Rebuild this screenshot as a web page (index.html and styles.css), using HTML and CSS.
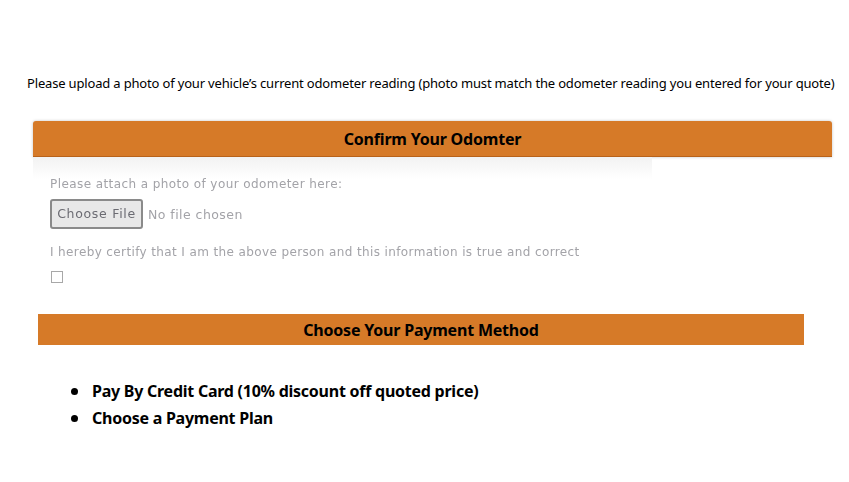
FILE: index.html
```html
<!DOCTYPE html>
<html>
<head>
<meta charset="utf-8">
<link rel="stylesheet" href="styles.css">
</head>
<body>
<div class="page">
  <p class="intro">Please upload a photo of your vehicle’s current odometer reading (photo must match the odometer reading you entered for your quote)</p>
  <div class="card">
    <div class="card-head">Confirm Your Odomter</div>
    <div class="card-body">
      <div class="shade"></div>
      <div class="label">Please attach a photo of your odometer here:</div>
      <div class="file-row">
        <span class="file-btn">Choose File</span>
        <span class="file-none">No file chosen</span>
      </div>
      <div class="label certify">I hereby certify that I am the above person and this information is true and correct</div>
      <span class="checkbox"></span>
    </div>
  </div>
  <div class="bar2">Choose Your Payment Method</div>
  <ul class="methods">
    <li>Pay By Credit Card (10% discount off quoted price)</li>
    <li>Choose a Payment Plan</li>
  </ul>
</div>
</body>
</html>
```
FILE: styles.css
```css
html, body {
  margin: 0;
  padding: 0;
  background: #fff;
}
.page {
  width: 849px;
  height: 482px;
  overflow: hidden;
  font-family: "Noto Sans", "Open Sans", sans-serif;
  color: #000;
}
.intro {
  margin: 75px 0 0 27px;
  font-size: 13px;
  line-height: 16px;
  letter-spacing: -0.17px;
  white-space: nowrap;
}
.card {
  margin: 30px 0 0 33px;
  width: 799px;
}
.card-head {
  height: 35px;
  background: #d67a28;
  border-radius: 3px 3px 0 0;
  border-bottom: 1px solid #b8621a;
  box-shadow: 0 0 3px rgba(0,0,0,0.25);
  text-align: center;
  font-weight: bold;
  font-size: 16px;
  line-height: 37px;
  letter-spacing: -0.2px;
}
.card-body {
  position: relative;
  padding: 20px 0 0 17px;
  font-family: "DejaVu Sans", sans-serif;
  color: #a3a3a8;
  filter: blur(0.35px);
}
.shade {
  position: absolute;
  left: 0;
  top: 0;
  width: 619px;
  height: 22px;
  background: linear-gradient(#f2f2f2, #fff);
}
.label {
  position: relative;
  font-size: 12px;
  line-height: 14px;
  letter-spacing: 0.42px;
  white-space: nowrap;
}
.certify {
  margin-top: 16px;
  letter-spacing: 0.38px;
}
.file-row {
  display: flex;
  align-items: center;
  margin-top: 8px;
  gap: 5px;
}
.file-btn {
  box-sizing: border-box;
  width: 93px;
  height: 30px;
  border: 2px solid #8a8a8a;
  border-radius: 3px;
  background: #e8e8e8;
  color: #6b6b72;
  font-size: 12.5px;
  line-height: 26px;
  text-align: center;
  letter-spacing: 0.7px;
}
.file-none {
  font-size: 12.5px;
  letter-spacing: 0.45px;
}
.checkbox {
  display: block;
  margin: 12px 0 0 1px;
  width: 10px;
  height: 10px;
  border: 1px solid #a8a8a8;
}
.bar2 {
  margin: 31px 0 0 38px;
  width: 766px;
  height: 31px;
  background: #d67a28;
  text-align: center;
  font-weight: bold;
  font-size: 16px;
  line-height: 33px;
  letter-spacing: -0.2px;
}
.methods {
  margin: 33px 0 0 0;
  padding: 0 0 0 92px;
  font-weight: bold;
  font-size: 16px;
  line-height: 27px;
  letter-spacing: -0.25px;
}
.methods li {
  list-style: none;
  position: relative;
}
.methods li::before {
  content: "";
  position: absolute;
  left: -21px;
  top: 10px;
  width: 7px;
  height: 7px;
  border-radius: 50%;
  background: #000;
}
```
